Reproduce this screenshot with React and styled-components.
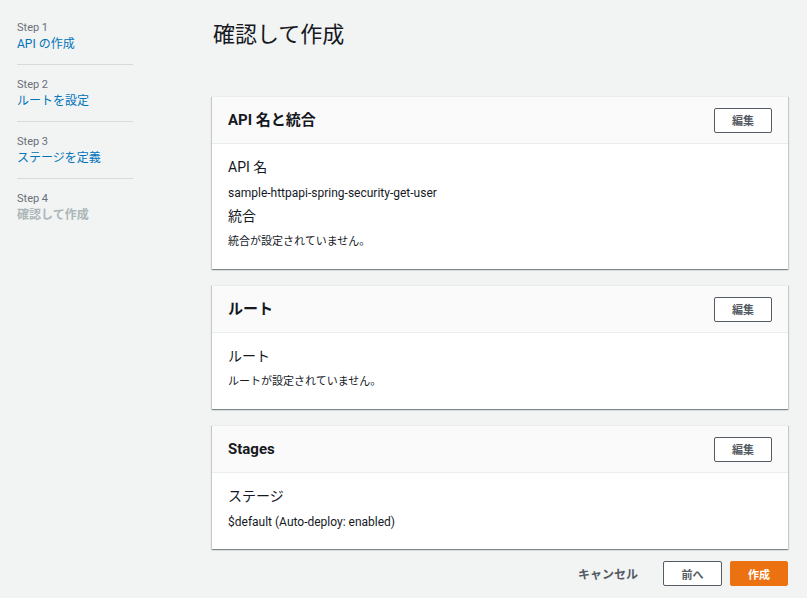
import styled, { createGlobalStyle } from "styled-components";

const GlobalStyle = createGlobalStyle`
  body {
    margin: 0;
    background: #f2f3f3;
    font-family: Roboto, "Noto Sans CJK JP", sans-serif;
    color: #16191f;
  }
`;

const Layout = styled.div`
  display: flex;
  min-height: 100vh;
`;

const Sidebar = styled.nav`
  width: 195px;
  padding: 20px 0 0 17px;
  flex-shrink: 0;
`;

const StepList = styled.ol`
  list-style: none;
  margin: 0;
  padding: 0;
  width: 116px;
`;

const StepItem = styled.li`
  padding: 12px 0 11px;
  border-bottom: 1px solid #d5dbdb;
  &:first-child {
    padding-top: 0;
  }
  &:last-child {
    border-bottom: none;
  }
`;

const StepLabel = styled.div`
  font-size: 11px;
  line-height: 16px;
  color: #687078;
`;

const StepLink = styled.div`
  font-size: 12px;
  line-height: 17px;
  color: ${(p) => (p.$current ? "#aab7b8" : "#0073bb")};
  font-weight: ${(p) => (p.$current ? 700 : 400)};
`;

const Main = styled.main`
  flex: 1;
  padding: 20px 19px 0 0;
`;

const PageTitle = styled.h1`
  margin: 0 0 46px 1px;
  font-size: 22px;
  line-height: 30px;
  font-weight: 400;
`;

const Card = styled.section`
  background: #fff;
  border-top: 1px solid #eaeded;
  box-shadow: 0 1px 1px 0 rgba(0, 28, 36, 0.3),
    1px 1px 1px 0 rgba(0, 28, 36, 0.15), -1px 1px 1px 0 rgba(0, 28, 36, 0.15);
  margin-bottom: 16px;
`;

const CardHeader = styled.header`
  display: flex;
  align-items: center;
  justify-content: space-between;
  height: 46px;
  padding: 0 16px;
  background: #fafafa;
  border-bottom: 1px solid #eaeded;
`;

const CardTitle = styled.h2`
  margin: 0;
  font-size: 15px;
  line-height: 22px;
  font-weight: 700;
`;

const CardBody = styled.div`
  padding: 12px 16px 17px;
`;

const FieldLabel = styled.div`
  font-size: 14px;
  line-height: 22px;
  margin-top: ${(p) => (p.$first ? 0 : "2px")};
`;

const FieldValue = styled.div`
  font-size: ${(p) => (p.$latin ? "12px" : "11px")};
  line-height: 20px;
  margin-top: 5px;
`;

const Button = styled.button`
  height: 25px;
  min-width: ${(p) => p.$width || "58px"};
  padding: 0 12px;
  font-family: inherit;
  font-size: 11px;
  font-weight: 700;
  border-radius: 2px;
  cursor: pointer;
  border: 1px solid ${(p) => (p.$primary ? "#ec7211" : "#545b64")};
  background: ${(p) => (p.$primary ? "#ec7211" : "#fff")};
  color: ${(p) => (p.$primary ? "#fff" : "#545b64")};
`;

const TextButton = styled.button`
  border: none;
  background: none;
  padding: 0 17px;
  height: 25px;
  font-family: inherit;
  font-size: 12px;
  font-weight: 700;
  color: #545b64;
  cursor: pointer;
`;

const Footer = styled.div`
  display: flex;
  justify-content: flex-end;
  align-items: center;
  gap: 8px;
  margin-top: -4px;
`;

const steps = [
  { label: "Step 1", name: "API の作成" },
  { label: "Step 2", name: "ルートを設定" },
  { label: "Step 3", name: "ステージを定義" },
  { label: "Step 4", name: "確認して作成", current: true },
];

const sections = [
  {
    title: "API 名と統合",
    fields: [
      ["API 名", "sample-httpapi-spring-security-get-user", true],
      ["統合", "統合が設定されていません。"],
    ],
  },
  { title: "ルート", fields: [["ルート", "ルートが設定されていません。"]] },
  {
    title: "Stages",
    fields: [["ステージ", "$default (Auto-deploy: enabled)", true]],
  },
];

export default function App() {
  return (
    <>
      <GlobalStyle />
      <Layout>
        <Sidebar>
          <StepList>
            {steps.map((s) => (
              <StepItem key={s.label}>
                <StepLabel>{s.label}</StepLabel>
                <StepLink $current={s.current}>{s.name}</StepLink>
              </StepItem>
            ))}
          </StepList>
        </Sidebar>
        <Main>
          <PageTitle>確認して作成</PageTitle>
          {sections.map((sec) => (
            <Card key={sec.title}>
              <CardHeader>
                <CardTitle>{sec.title}</CardTitle>
                <Button>編集</Button>
              </CardHeader>
              <CardBody>
                {sec.fields.map(([label, value, latin], i) => (
                  <div key={label}>
                    <FieldLabel $first={i === 0}>{label}</FieldLabel>
                    <FieldValue $latin={latin}>{value}</FieldValue>
                  </div>
                ))}
              </CardBody>
            </Card>
          ))}
          <Footer>
            <TextButton>キャンセル</TextButton>
            <Button $width="59px">前へ</Button>
            <Button $primary>作成</Button>
          </Footer>
        </Main>
      </Layout>
    </>
  );
}
